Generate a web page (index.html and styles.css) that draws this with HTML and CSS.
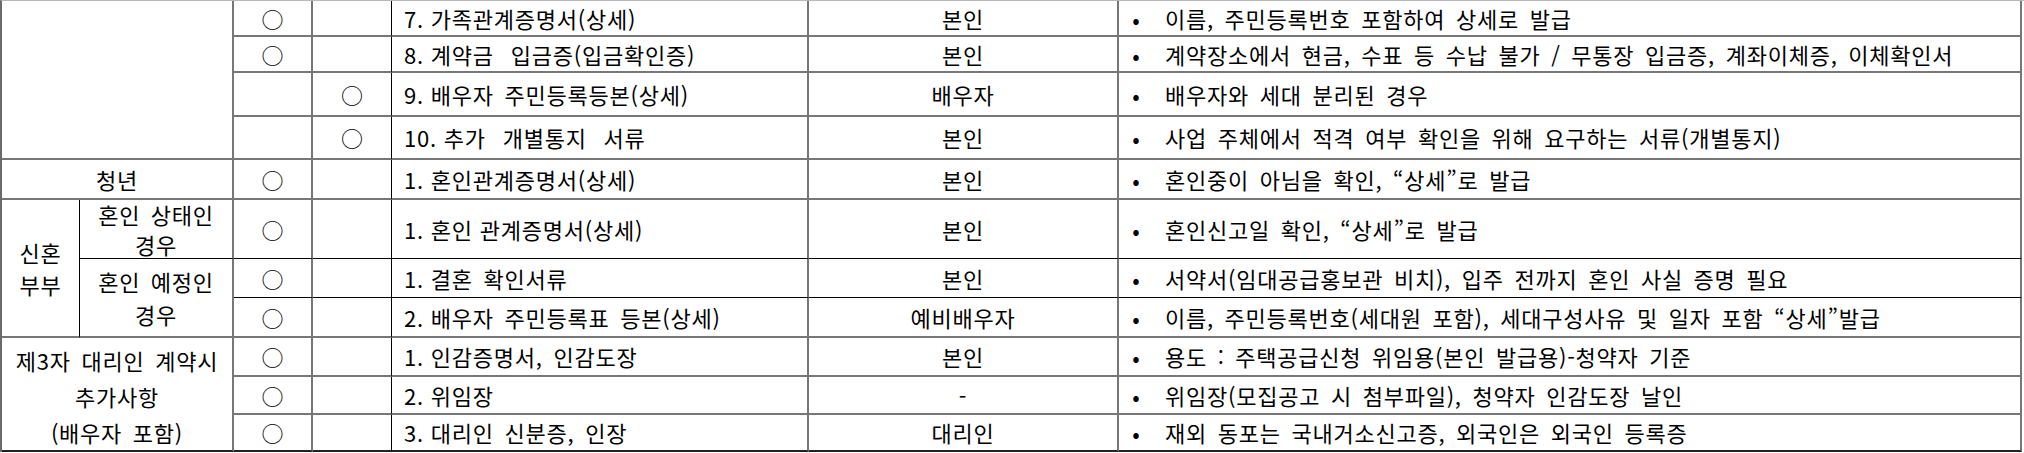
FILE: index.html
```html
<!DOCTYPE html>
<html lang="ko">
<head>
<meta charset="utf-8">
<title>제출서류 목록</title>
<link rel="stylesheet" href="styles.css">
</head>
<body>
<div class="sheet">
  <!-- row 1 -->
  <div class="cell cat-cont"></div>
  <div class="cell mark">○</div>
  <div class="cell mark mark-d"></div>
  <div class="cell doc"><span><span class="num">7. </span>가족관계증명서(상세)</span></div>
  <div class="cell who">본인</div>
  <div class="cell note"><span class="dot">•</span><span>이름, 주민등록번호 포함하여 상세로 발급</span></div>
  <!-- row 2 -->
  <div class="cell mark">○</div>
  <div class="cell mark mark-d"></div>
  <div class="cell doc wide"><span><span class="num">8. </span>계약금 입금증(입금확인증)</span></div>
  <div class="cell who">본인</div>
  <div class="cell note"><span class="dot">•</span><span>계약장소에서 현금, 수표 등 수납 불가 / 무통장 입금증, 계좌이체증, 이체확인서</span></div>
  <!-- row 3 -->
  <div class="cell mark"></div>
  <div class="cell mark mark-d">○</div>
  <div class="cell doc"><span><span class="num">9. </span>배우자 주민등록등본(상세)</span></div>
  <div class="cell who">배우자</div>
  <div class="cell note"><span class="dot">•</span><span>배우자와 세대 분리된 경우</span></div>
  <!-- row 4 -->
  <div class="cell mark"></div>
  <div class="cell mark mark-d">○</div>
  <div class="cell doc wide"><span><span class="num">10. </span>추가 개별통지 서류</span></div>
  <div class="cell who">본인</div>
  <div class="cell note"><span class="dot">•</span><span>사업 주체에서 적격 여부 확인을 위해 요구하는 서류(개별통지)</span></div>
  <!-- row 5 -->
  <div class="cell cat cat-youth">청년</div>
  <div class="cell mark">○</div>
  <div class="cell mark mark-d"></div>
  <div class="cell doc"><span><span class="num">1. </span>혼인관계증명서(상세)</span></div>
  <div class="cell who">본인</div>
  <div class="cell note"><span class="dot">•</span><span>혼인중이 아님을 확인, “상세”로 발급</span></div>
  <!-- row 6 -->
  <div class="cell cat cat-newlywed">신혼<br>부부</div>
  <div class="cell cat cat-married line-b">혼인 상태인<br>경우</div>
  <div class="cell mark line-b">○</div>
  <div class="cell mark mark-d line-b"></div>
  <div class="cell doc narrow line-b"><span><span class="num">1. </span>혼인 관계증명서(상세)</span></div>
  <div class="cell who line-b">본인</div>
  <div class="cell note line-b"><span class="dot">•</span><span>혼인신고일 확인, “상세”로 발급</span></div>
  <!-- row 7 -->
  <div class="cell cat cat-planned">혼인 예정인<br>경우</div>
  <div class="cell mark line-b">○</div>
  <div class="cell mark mark-d line-b"></div>
  <div class="cell doc line-b"><span><span class="num">1. </span>결혼 확인서류</span></div>
  <div class="cell who line-b">본인</div>
  <div class="cell note line-b"><span class="dot">•</span><span>서약서(임대공급홍보관 비치), 입주 전까지 혼인 사실 증명 필요</span></div>
  <!-- row 8 -->
  <div class="cell mark">○</div>
  <div class="cell mark mark-d"></div>
  <div class="cell doc"><span><span class="num">2. </span>배우자 주민등록표 등본(상세)</span></div>
  <div class="cell who">예비배우자</div>
  <div class="cell note"><span class="dot">•</span><span>이름, 주민등록번호(세대원 포함), 세대구성사유 및 일자 포함 “상세”발급</span></div>
  <!-- row 9 -->
  <div class="cell cat cat-proxy">제3자 대리인 계약시<br>추가사항<br>(배우자 포함)</div>
  <div class="cell mark">○</div>
  <div class="cell mark mark-d"></div>
  <div class="cell doc"><span><span class="num">1. </span>인감증명서, 인감도장</span></div>
  <div class="cell who">본인</div>
  <div class="cell note"><span class="dot">•</span><span>용도 : 주택공급신청 위임용(본인 발급용)-청약자 기준</span></div>
  <!-- row 10 -->
  <div class="cell mark">○</div>
  <div class="cell mark mark-d"></div>
  <div class="cell doc"><span><span class="num">2. </span>위임장</span></div>
  <div class="cell who">-</div>
  <div class="cell note"><span class="dot">•</span><span>위임장(모집공고 시 첨부파일), 청약자 인감도장 날인</span></div>
  <!-- row 11 -->
  <div class="cell mark last">○</div>
  <div class="cell mark mark-d last"></div>
  <div class="cell doc last"><span><span class="num">3. </span>대리인 신분증, 인장</span></div>
  <div class="cell who last">대리인</div>
  <div class="cell note last"><span class="dot">•</span><span>재외 동포는 국내거소신고증, 외국인은 외국인 등록증</span></div>
</div>
</body>
</html>
```

FILE: styles.css
```css
html, body {
  margin: 0;
  padding: 0;
  background: #ffffff;
}

body {
  font-family: "Noto Sans CJK KR", "Noto Sans", sans-serif;
  font-size: 22px;
  letter-spacing: 0.76px;
  word-spacing: 3.8px;
  color: #000000;
}

.sheet {
  display: grid;
  grid-template-columns: 78px 154px 79px 79px 417px 310px 903px;
  grid-template-rows: 36px 36px 44px 43px 40px 59px 39px 40px 39px 38px 37px;
  width: 2022px;
  border-left: 2px solid #6a6a6a;
  border-top: 1px solid #b8b8b8;
}

.cell {
  box-sizing: border-box;
  display: flex;
  align-items: center;
  border-right: 2px solid #777777;
  border-bottom: 2px solid #777777;
  line-height: 1.2;
  white-space: nowrap;
}

.cat {
  justify-content: center;
  text-align: center;
}

.cat-cont {
  grid-column: span 2;
  grid-row: span 4;
}

.cat-youth {
  grid-column: span 2;
}

.cat-newlywed {
  grid-row: span 3;
  line-height: 32px;
  border-right: 1px solid #000000;
}

.cat-married {
  line-height: 30px;
}

.cat-planned {
  grid-row: span 2;
  line-height: 33px;
}

.cat-proxy {
  grid-column: span 2;
  grid-row: span 3;
  line-height: 36px;
  padding-top: 4px;
  border-bottom: 2px solid #222222;
}

.mark {
  justify-content: center;
  letter-spacing: 0;
}

.mark-d {
  border-right: 1px solid #000000;
}

.doc {
  padding-left: 12px;
  white-space: pre;
}

.doc .num {
  word-spacing: 0;
}

.wide {
  word-spacing: 10px;
}

.narrow {
  word-spacing: 0;
}

.who {
  justify-content: center;
}

.note {
  padding-left: 10px;
}

.dot {
  display: inline-block;
  width: 14px;
  text-align: center;
  margin-right: 22px;
  letter-spacing: 0;
}

.line-b {
  border-bottom: 1px solid #000000;
}

.last {
  border-bottom: 2px solid #222222;
}
```
